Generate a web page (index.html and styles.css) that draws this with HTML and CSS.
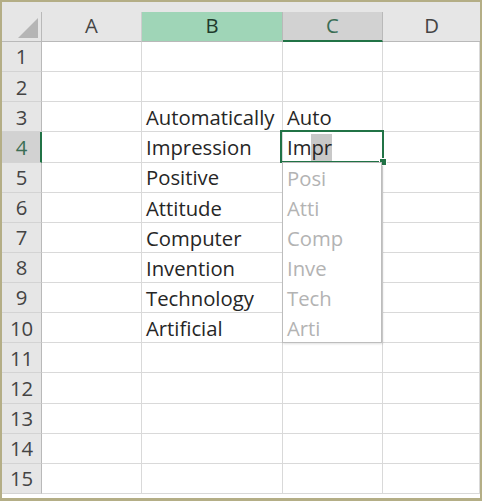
FILE: index.html
```html
<!DOCTYPE html>
<html>
<head>
<meta charset="utf-8">
<link rel="stylesheet" href="styles.css">
</head>
<body>
<div class="frame">
  <div class="strip"></div>
  <div class="sheet">
    <div class="corner"><span class="tri"></span></div>
    <div class="ch">A</div>
    <div class="ch ch-b">B</div>
    <div class="ch ch-c">C</div>
    <div class="ch ch-d">D</div>

    <div class="rh">1</div><div class="c"></div><div class="c"></div><div class="c"></div><div class="c"></div>
    <div class="rh">2</div><div class="c"></div><div class="c"></div><div class="c"></div><div class="c"></div>
    <div class="rh">3</div><div class="c"></div><div class="c">Automatically</div><div class="c">Auto</div><div class="c"></div>
    <div class="rh rh-sel">4</div><div class="c"></div><div class="c">Impression</div><div class="c">Im<span class="hl">pr</span></div><div class="c"></div>
    <div class="rh">5</div><div class="c"></div><div class="c">Positive</div><div class="c"></div><div class="c"></div>
    <div class="rh">6</div><div class="c"></div><div class="c">Attitude</div><div class="c"></div><div class="c"></div>
    <div class="rh">7</div><div class="c"></div><div class="c">Computer</div><div class="c"></div><div class="c"></div>
    <div class="rh">8</div><div class="c"></div><div class="c">Invention</div><div class="c"></div><div class="c"></div>
    <div class="rh">9</div><div class="c"></div><div class="c">Technology</div><div class="c"></div><div class="c"></div>
    <div class="rh">10</div><div class="c"></div><div class="c">Artificial</div><div class="c"></div><div class="c"></div>
    <div class="rh">11</div><div class="c"></div><div class="c"></div><div class="c"></div><div class="c"></div>
    <div class="rh">12</div><div class="c"></div><div class="c"></div><div class="c"></div><div class="c"></div>
    <div class="rh">13</div><div class="c"></div><div class="c"></div><div class="c"></div><div class="c"></div>
    <div class="rh">14</div><div class="c"></div><div class="c"></div><div class="c"></div><div class="c"></div>
    <div class="rh">15</div><div class="c"></div><div class="c"></div><div class="c"></div><div class="c"></div>
  </div>

  <div class="active"><span class="handle"></span></div>

  <div class="dropdown">
    <div class="item">Posi</div>
    <div class="item">Atti</div>
    <div class="item">Comp</div>
    <div class="item">Inve</div>
    <div class="item">Tech</div>
    <div class="item">Arti</div>
  </div>
</div>
</body>
</html>
```

FILE: styles.css
```css
* { box-sizing: border-box; }
html, body { margin: 0; padding: 0; background: #ffffff; }
body {
  font-family: "Open Sans", "Noto Sans", sans-serif;
  font-size: 20.3px;
  color: #262626;
}
.frame {
  position: relative;
  width: 482px;
  height: 501px;
  border-style: solid;
  border-color: #b4ae86;
  border-width: 2px 2px 3px 2px;
  background: #ffffff;
  overflow: hidden;
}
.strip {
  height: 10px;
  background: #e6e6e6;
}
.sheet {
  display: grid;
  grid-template-columns: 40px 100px 141px 100px 97px;
  grid-template-rows: 30px repeat(15, 30.13px);
}
.corner {
  background: #e6e6e6;
  border-right: 1px solid #b9b9b9;
  border-bottom: 1px solid #b9b9b9;
  display: flex;
  justify-content: flex-end;
  align-items: flex-end;
  padding: 0 3px 3px 0;
}
.tri {
  width: 0;
  height: 0;
  border-left: 20px solid transparent;
  border-bottom: 20px solid #b5b5b5;
}
.ch {
  background: #e6e6e6;
  border-right: 1px solid #cdcdcd;
  border-bottom: 1px solid #b9b9b9;
  display: flex;
  align-items: center;
  justify-content: center;
  color: #444444;
  line-height: 1;
  padding-bottom: 3px;
}
.ch-b {
  background: #9fd5b7;
  color: #1f3b2c;
  border-right-color: #b9b9b9;
}
.ch-c {
  background: #d2d2d2;
  color: #3b6e55;
  border-bottom: 2px solid #217346;
  padding-bottom: 2px;
  border-right-color: #b9b9b9;
}
.ch-d {
  border-right: none;
}
.rh {
  background: #e6e6e6;
  border-right: 1px solid #b9b9b9;
  border-bottom: 1px solid #d3d3d3;
  display: flex;
  align-items: center;
  justify-content: center;
  color: #444444;
  line-height: 1;
}
.rh-sel {
  background: #d2d2d2;
  color: #3b6e55;
  border-right: 2px solid #217346;
  padding-left: 1px;
}
.c {
  border-right: 1px solid #d9d9d9;
  border-bottom: 1px solid #d9d9d9;
  display: flex;
  align-items: center;
  padding-left: 4px;
  white-space: nowrap;
  line-height: 1;
  padding-top: 1px;
}
.hl {
  background: #c8c8c8;
  padding: 3px 0 4px;
}
.active {
  position: absolute;
  left: 278px;
  top: 128px;
  width: 104px;
  height: 33px;
  border: 2px solid #217346;
}
.handle {
  position: absolute;
  right: -5px;
  bottom: -5px;
  width: 8px;
  height: 8px;
  background: #217346;
  border: 1px solid #ffffff;
}
.dropdown {
  position: absolute;
  left: 280px;
  top: 160px;
  width: 100px;
  height: 181px;
  background: #ffffff;
  border: 1px solid #bdbdbd;
  box-shadow: 1px 1px 2px rgba(0, 0, 0, 0.12);
}
.item {
  height: 30px;
  display: flex;
  align-items: center;
  padding-left: 4px;
  color: #b3b3b3;
  line-height: 1;
}
```
